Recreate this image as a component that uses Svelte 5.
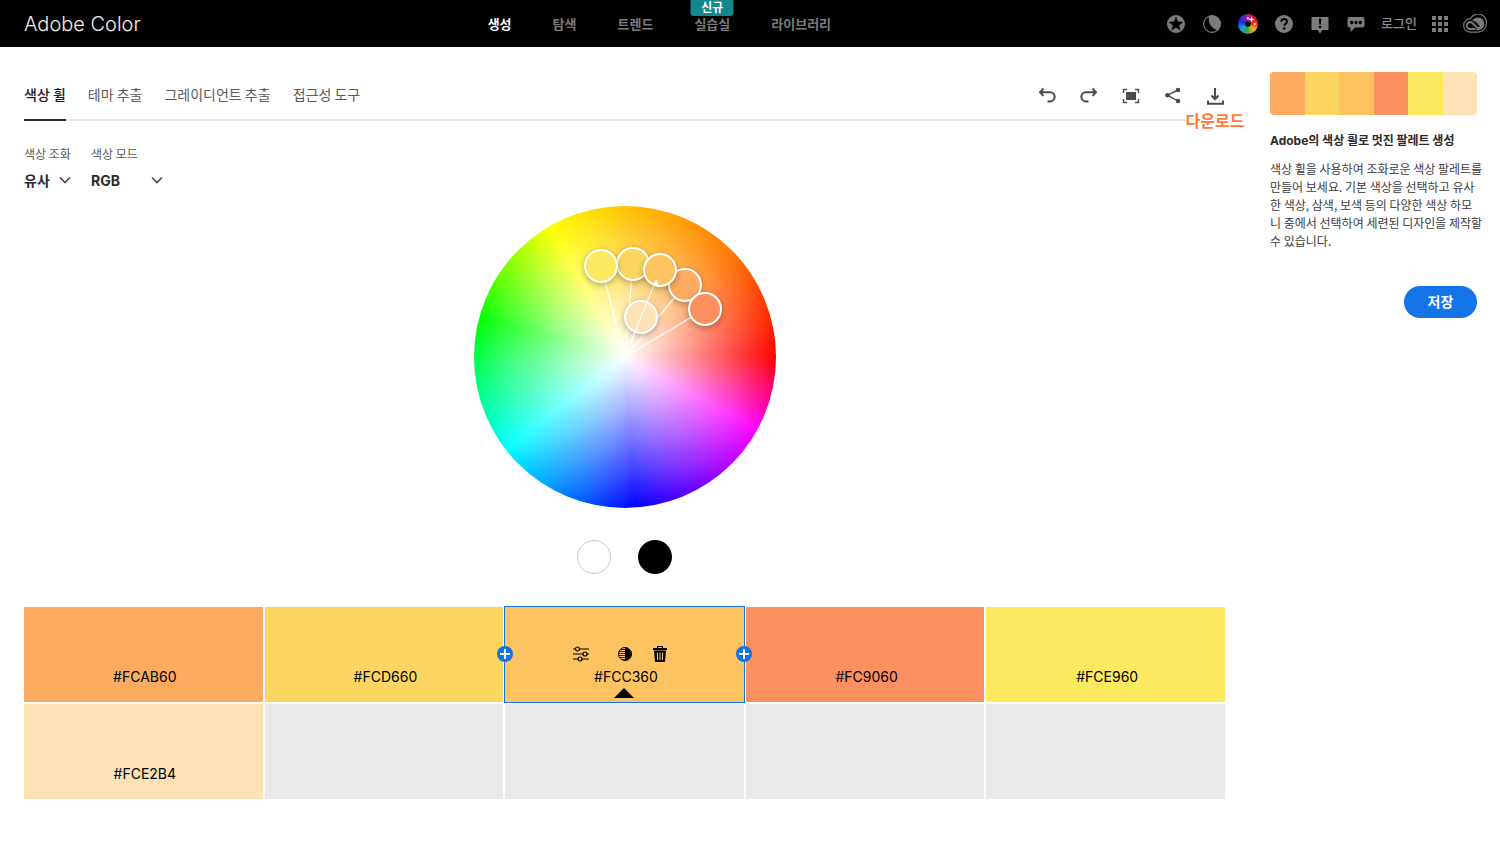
<script lang="ts">
  type Swatch = { hex: string; x: number; y: number };

  const nav = ['생성', '탐색', '트렌드', '실습실', '라이브러리'];
  const tabs = ['색상 휠', '테마 추출', '그레이디언트 추출', '접근성 도구'];

  // x and y are the marker's place on the wheel
  const swatches: Swatch[] = [
    { hex: '#FCAB60', x: 211, y: 79 },
    { hex: '#FCD660', x: 159, y: 58 },
    { hex: '#FCC360', x: 186, y: 64 },
    { hex: '#FC9060', x: 231, y: 103 },
    { hex: '#FCE960', x: 127, y: 60 },
    { hex: '#FCE2B4', x: 167, y: 111 }
  ];
  const slots = 10;
  const center = 151;

  let tab = $state(0);
  let selected = $state(2);
  let base = $derived(swatches[selected]);
  let markers = $derived([5, 1, 4, 0, 3, 2].filter((i) => i !== selected).map((i) => swatches[i]));
</script>

<header>
  <a class="brand" href="/">Adobe Color</a>
  <nav>
    {#each nav as item, i}
      <a href="#{item}" class:active={i === 0}>
        {item}
        {#if i === 3}<span class="new">신규</span>{/if}
      </a>
    {/each}
  </nav>
  <div class="account">
    <div class="icons">
      <button aria-label="즐겨찾기">
        <svg viewBox="0 0 20 20"><circle cx="10" cy="10" r="9" fill="currentColor" /><path d="m10 2.600 2 5 5.300.4-4.100 3.400 1.400 5.200L10 13.800l-4.600 2.800 1.400-5.200L2.700 8 8 7.600Z" /></svg>
      </button>
      <button aria-label="테마">
        <svg viewBox="0 0 20 20"><circle cx="10" cy="10" r="8.400" fill="none" stroke="currentColor" stroke-width="1.100" /><path fill="currentColor" d="M7 2A8.600 8.600 0 0 1 16 16.200C10 15.500 5.500 9.500 7 2Z" /></svg>
      </button>
      <button aria-label="색상 휠">
        <span class="mini-wheel">
          <svg viewBox="0 0 20 20" fill="#fff"><circle cx="10" cy="10" r="2.800" fill="#000" /><path d="m13.500 2.500 .8 2.200 2.200.8-2.200.8-.8 2.200-.8-2.200-2.200-.8 2.200-.8ZM10 2.500l.5 1.200 1.200.5-1.200.5L10 5.900l-.5-1.200-1.200-.5 1.200-.5ZM16.800 8.500l.5 1.100 1.100.5-1.100.5-.5 1.100-.5-1.100-1.100-.5 1.100-.5Z" /></svg>
        </span>
      </button>
      <button aria-label="도움말">
        <svg viewBox="0 0 20 20"><circle cx="10" cy="10" r="9" fill="currentColor" /><path d="M7.200 7.800C7.300 5.900 8.500 5 10.100 5c1.800 0 2.900 1 2.900 2.500 0 2.300-2.700 2.100-2.700 4.300" fill="none" stroke="#000" stroke-width="2" /><circle cx="10.200" cy="14.500" r="1.300" /></svg>
      </button>
      <button aria-label="알림">
        <svg viewBox="0 0 20 20"><path fill="currentColor" d="M1.500 3h17v13h-6L10 19.500 7.500 16h-6Z" /><path d="M8.900 4.500h2.400l-.4 6H9.300Z" /><circle cx="10.100" cy="13" r="1.300" /></svg>
      </button>
      <button aria-label="의견">
        <svg viewBox="0 0 20 20"><path fill="currentColor" d="M3.500 3h13a2 2 0 0 1 2 2v6.500a2 2 0 0 1-2 2H9L4.500 18v-4.500h-1a2 2 0 0 1-2-2V5a2 2 0 0 1 2-2Z" /><circle cx="5.700" cy="8.500" r="1.700" /><circle cx="10" cy="8.500" r="1.700" /><circle cx="14.300" cy="8.500" r="1.700" /></svg>
      </button>
    </div>
    <a class="login" href="#login">로그인</a>
    <button class="apps" aria-label="앱">
      <svg viewBox="0 0 16 16" fill="currentColor">
        {#each [0, 6, 12] as y}
          {#each [0, 6, 12] as x}<rect {x} {y} width="4" height="4" />{/each}
        {/each}
      </svg>
    </button>
    <button class="cloud" aria-label="Creative Cloud">
      <svg viewBox="0 0 24 20" fill="none">
        <path stroke="currentColor" stroke-width="1.200" d="M7.500 4.600A8.400 8.400 0 0 1 23.300 9.800a8.300 8.300 0 0 1-8.300 8.300H7A6.500 6.500 0 0 1 .7 11.600 6.800 6.800 0 0 1 7.500 4.600Z" />
        <circle cx="15" cy="9.800" r="6.400" fill="currentColor" />
        <path stroke="#000" stroke-width="4" d="M12.300 14.800H7.200a3.300 3.300 0 1 1 2.300-5.600l4.600 4.800" />
        <path stroke="currentColor" stroke-width="2" d="M12.300 14.900H7.200a3.400 3.400 0 1 1 2.300-5.800l4.600 4.800" />
        <path stroke="#000" stroke-width="1.200" d="M10.500 7.500c1.200 0 2 .8 2.800 1.700l3.200 3.500" />
      </svg>
    </button>
  </div>
</header>

<main>
  <section class="workspace">
    <div class="bar">
      <div class="tabs" role="tablist">
        {#each tabs as label, i}
          <button role="tab" aria-selected={tab === i} class:active={tab === i} onclick={() => (tab = i)}>{label}</button>
        {/each}
      </div>
      <div class="tools">
        <button aria-label="실행 취소">
          <svg viewBox="0 0 20 20"><path d="M6.500 2.500 3 6.200l3.500 3.700M3 6.200h10a4.600 4.600 0 0 1 0 9.300h-2.500" /></svg>
        </button>
        <button aria-label="다시 실행">
          <svg viewBox="0 0 20 20"><path d="M13.500 2.500 17 6.200l-3.500 3.700M17 6.200H7a4.600 4.600 0 0 0 0 9.300h2.500" /></svg>
        </button>
        <button aria-label="전체 화면">
          <svg viewBox="0 0 20 20"><path class="thin" d="M2.500 7V3.500H6M14 3.500h3.500V7M17.500 13v3.500H14M6 16.500H2.500V13" /><path class="solid" d="M5 6h10v8H5Z" /></svg>
        </button>
        <button aria-label="공유">
          <svg viewBox="0 0 20 20"><path class="thin" d="m15 4-10.500 5.200L15 15" /><g class="solid"><circle cx="15" cy="4" r="2.300" /><circle cx="4.500" cy="9.200" r="2.300" /><circle cx="15" cy="15" r="2.300" /></g></svg>
        </button>
        <button aria-label="다운로드">
          <svg viewBox="0 0 20 20"><path d="M10 2v10.500M6.500 9.500l3.500 3.700 3.500-3.700M3 14.500v3.300h15v-3.300" /></svg>
          <span class="tip">다운로드</span>
        </button>
      </div>
    </div>

    <div class="options">
      <label>
        <span>색상 조화</span>
        <span class="pick harmony">
          <select><option>유사</option><option>단색</option><option>삼색</option><option>보색</option></select>
          <svg viewBox="0 0 12 12"><path d="m1 3.500 5 5 5-5" /></svg>
        </span>
      </label>
      <label>
        <span>색상 모드</span>
        <span class="pick mode">
          <select><option>RGB</option><option>HSB</option><option>LAB</option></select>
          <svg viewBox="0 0 12 12"><path d="m1 3.500 5 5 5-5" /></svg>
        </span>
      </label>
    </div>

    <div class="wheel">
      <svg viewBox="0 0 302 302">
        <g class="spokes">
          {#each markers as m}<line x1={center} y1={center} x2={m.x} y2={m.y} />{/each}
        </g>
        {#each markers as m}<circle cx={m.x} cy={m.y} r="16" fill={m.hex} />{/each}
        <line x1={center} y1={center} x2={base.x} y2={base.y} />
        <circle cx={base.x} cy={base.y} r="16" fill={base.hex} />
        <path fill="#fff" d="m182.500 73.500 3 7-7.500-2Z" />
      </svg>
    </div>

    <div class="grounds">
      <button class="light" aria-label="흰색 배경"></button>
      <button class="dark" aria-label="검은색 배경"></button>
    </div>

    <div class="palette">
      {#each { length: slots } as _, i}
        <div class="swatch" class:selected={i === selected} style:background={swatches[i]?.hex}>
          {#if i === selected}
            <div class="actions">
              <button class="sliders" aria-label="조정">
                <svg viewBox="0 0 18 18" fill="none" stroke="#000" stroke-width="1.200"><path d="M1 4h2.500M7.500 4H17M1 9h10M15 9h2M1 14h5M10 14h7" /><circle cx="5.500" cy="4" r="2" /><circle cx="13" cy="9" r="2" /><circle cx="8" cy="14" r="2" /></svg>
              </button>
              <button class="shades" aria-label="음영">
                <svg viewBox="0 0 14 14"><circle cx="7" cy="7" r="6.500" fill="none" stroke="#000" /><path d="M7 .5a6.500 6.500 0 0 1 0 13Z" /><path stroke="#000" stroke-width=".8" d="M2.500 2.500H7M1 4.500h6M.5 6.500H7M.5 8.500H7M1.500 10.500H7M4 12.500h3" /></svg>
              </button>
              <button class="remove" aria-label="삭제">
                <svg viewBox="0 0 16 18"><path d="M1 3h4V1h6v2h4v2H1Zm5.200-1v1h3.600V2ZM2 5.500h12L13 17H3Z" /><path stroke="#fcc360" stroke-width="1.100" d="m5.300 7.500.4 7.500M8 7.500V15M10.700 7.500l-.4 7.500" /></svg>
              </button>
            </div>
          {/if}
          {#if swatches[i]}<span class="hex">{swatches[i].hex}</span>{/if}
          {#if i === selected}
            <svg class="pointer" viewBox="0 0 20 10"><path d="m10 0 10 10H0Z" /></svg>
            {#each ['before', 'after'] as side}
              <button class="add {side}" aria-label="색상 추가">
                <svg viewBox="0 0 16 16"><circle cx="8" cy="8" r="8" fill="#1473e6" /><path stroke="#fff" stroke-width="2" d="M8 3v10M3 8h10" /></svg>
              </button>
            {/each}
          {/if}
        </div>
      {/each}
    </div>
  </section>

  <aside>
    <div class="preview">
      {#each swatches as s}<span style:background={s.hex}></span>{/each}
    </div>
    <h1><span>Adobe</span>의 색상 휠로 멋진 팔레트 생성</h1>
    <p>
      색상 휠을 사용하여 조화로운 색상 팔레트를<br />
      만들어 보세요. 기본 색상을 선택하고 유사<br />
      한 색상, 삼색, 보색 등의 다양한 색상 하모<br />
      니 중에서 선택하여 세련된 디자인을 제작할<br />
      수 있습니다.
    </p>
    <button class="save">저장</button>
  </aside>
</main>

<style>
  :global(body) {
    background: #fff;
    color: #2c2c2c;
    font-family: 'Noto Sans CJK KR', sans-serif;
  }

  button {
    padding: 0;
    border: 0;
    background: none;
    color: inherit;
    font: inherit;
    cursor: pointer;
  }

  a {
    color: inherit;
    text-decoration: none;
  }

  svg {
    display: block;
    width: 100%;
  }

  header {
    display: flex;
    align-items: center;
    justify-content: space-between;
    height: 47px;
    padding: 0 13px 0 24px;
    background: #000;
    color: #7b7b7b;
    font-size: 13px;
    line-height: 20px;
  }

  .brand {
    color: #f0f0f0;
    font-family: Inter, sans-serif;
    font-size: 20px;
    font-weight: 300;
  }

  nav {
    display: flex;
    gap: 41px;
    padding-left: 12px;
    font-weight: 700;
  }

  nav a {
    position: relative;
  }

  nav .active {
    color: #fff;
  }

  .new {
    position: absolute;
    left: 50%;
    top: -14px;
    width: 43px;
    height: 16px;
    border-radius: 0 0 3px 3px;
    background: #12878c;
    color: #fff;
    font-size: 12px;
    line-height: 14px;
    text-align: center;
    transform: translateX(-50%);
  }

  .account {
    display: flex;
    align-items: center;
    gap: 15px;
  }

  .icons {
    display: flex;
    gap: 16px;
  }

  .icons button {
    width: 20px;
  }

  .login {
    padding-bottom: 2px;
    color: #8c8c8c;
    font-weight: 500;
  }

  .apps {
    width: 16px;
  }

  .cloud {
    width: 24px;
  }

  .mini-wheel {
    display: block;
    border-radius: 50%;
    background: conic-gradient(#b0209a, #e8201c 60deg, #f03c1c 95deg, #f4b51c 130deg, #35a83a 185deg, #149ee0 240deg, #1a2ce0 285deg, #6a20c0 330deg, #b0209a);
  }

  main {
    display: flex;
    gap: 45px;
    padding: 25px 23px 0 24px;
  }

  .workspace {
    flex: 1;
    min-width: 0;
  }

  .bar {
    display: flex;
    justify-content: space-between;
    height: 47px;
    border-bottom: 2px solid #eaeaea;
  }

  .tabs {
    display: flex;
    gap: 22px;
  }

  .tabs button {
    height: 49px;
    padding-bottom: 4px;
    border-bottom: 2px solid transparent;
    color: #5a5a5a;
    font-size: 14px;
  }

  .tabs .active {
    border-color: #2c2c2c;
    color: #1e1e1e;
    font-weight: 500;
  }

  .tools {
    display: flex;
    gap: 22px;
    color: #4b4b4b;
  }

  .tools button {
    position: relative;
    width: 20px;
  }

  .tools svg {
    fill: none;
    stroke: currentColor;
    stroke-width: 2;
  }

  .tools .thin {
    stroke-width: 1.4;
  }

  .tools .solid {
    fill: currentColor;
    stroke: none;
  }

  .tip {
    position: absolute;
    left: 50%;
    top: 38px;
    background: #fff;
    color: #ff7a3d;
    font-size: 16px;
    font-weight: 700;
    line-height: 20px;
    white-space: nowrap;
    transform: translateX(-50%);
  }

  .options {
    display: flex;
    gap: 20px;
    margin-top: 24px;
    color: #5a5a5a;
    font-size: 12px;
    line-height: 18px;
  }

  .pick {
    display: flex;
    align-items: center;
    margin-top: 5px;
  }

  .harmony {
    width: 47px;
  }

  .mode {
    width: 72px;
  }

  .pick svg {
    flex: none;
    width: 12px;
    margin-left: -12px;
    fill: none;
    stroke: #4b4b4b;
    stroke-width: 1.7;
    pointer-events: none;
  }

  select {
    width: 100%;
    height: 24px;
    padding: 0;
    border: 0;
    appearance: none;
    background: none;
    color: #2c2c2c;
    font-family: inherit;
    font-size: 14px;
    font-weight: 700;
  }

  .mode select {
    font-family: Inter, sans-serif;
  }

  .wheel {
    width: 302px;
    margin: 14px auto 0;
    border-radius: 50%;
    background:
      radial-gradient(closest-side, #fff, rgba(255, 255, 255, 0)),
      conic-gradient(from 90deg, #f00, #f0f 29deg, #00f 86deg, #0ff 142deg, #0f0 195deg, #ff0 240deg, #ffc400 270deg, #ff7800 315deg, #f00);
  }

  .wheel line {
    stroke: #fff;
    stroke-width: 1.2;
  }

  .wheel circle {
    stroke: #fff;
    stroke-width: 2;
    filter: drop-shadow(0 2px 3px rgba(0, 0, 0, 0.3));
  }

  .grounds {
    display: flex;
    justify-content: center;
    align-items: center;
    gap: 27px;
    margin: 32px 0 33px;
  }

  .light,
  .dark {
    width: 34px;
    height: 34px;
    border-radius: 50%;
  }

  .light {
    border: 1px solid #c8c8c8;
  }

  .dark {
    background: #000;
  }

  .palette {
    display: grid;
    grid-template-columns: repeat(5, 1fr);
    gap: 2px;
  }

  .swatch {
    position: relative;
    display: flex;
    flex-direction: column;
    align-items: center;
    justify-content: flex-end;
    box-sizing: border-box;
    height: 95px;
    padding: 0 0 15px 3px;
    background: #e9e9e9;
  }

  .selected {
    outline: 1px solid #1473e6;
    z-index: 1;
  }

  .hex {
    color: #000;
    font-family: Inter, sans-serif;
    font-size: 14px;
    line-height: 20px;
  }

  .actions {
    display: flex;
    align-items: center;
    gap: 20px;
    height: 20px;
    margin-bottom: 3px;
    padding-right: 12px;
  }

  .sliders {
    width: 18px;
    margin-right: 8px;
  }

  .shades {
    width: 14px;
  }

  .remove {
    width: 16px;
  }

  .pointer {
    position: absolute;
    bottom: 4px;
    left: 50%;
    width: 20px;
    margin-left: -10px;
  }

  .add {
    position: absolute;
    top: 39px;
    width: 16px;
  }

  .before {
    left: -8px;
  }

  .after {
    right: -8px;
  }

  aside {
    flex: none;
    width: 207px;
  }

  .preview {
    display: flex;
    height: 43px;
    overflow: hidden;
    border-radius: 4px;
  }

  .preview span {
    flex: 1;
  }

  h1 {
    margin: 16px 0 10px;
    font-size: 12px;
    font-weight: 700;
    line-height: 18px;
    white-space: nowrap;
  }

  h1 span {
    font-family: Inter, sans-serif;
  }

  p {
    margin: 0;
    color: #3c3c3c;
    font-size: 12px;
    line-height: 18px;
    white-space: nowrap;
  }

  .save {
    display: block;
    width: 73px;
    height: 32px;
    margin: 36px 0 0 auto;
    padding-bottom: 2px;
    border-radius: 16px;
    background: #1473e6;
    color: #fff;
    font-size: 14px;
    font-weight: 700;
    line-height: 20px;
  }
</style>
